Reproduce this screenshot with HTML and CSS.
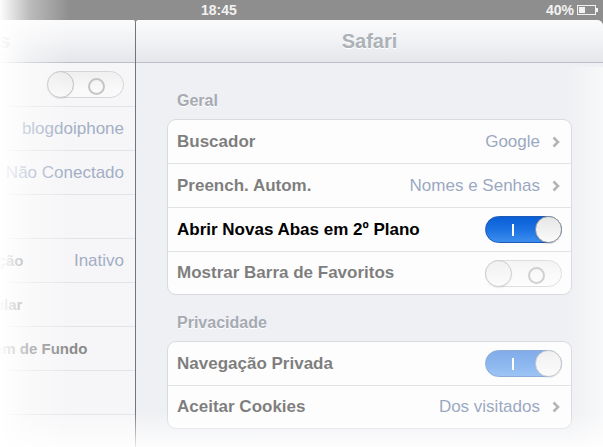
FILE: index.html
```html
<!DOCTYPE html>
<html lang="pt-BR">
<head>
    <meta charset="UTF-8">
    <meta name="viewport" content="width=device-width, initial-scale=1.0">
    <title>Ajustes - Safari</title>
    <link rel="stylesheet" href="styles.css">
</head>
<body>
    <div class="screen">
        <div class="statusbar">
            <span class="time">18:45</span>
            <span class="battery">40%
                <svg width="22" height="10" viewBox="0 0 22 10">
                    <rect x="0.5" y="0.5" width="18" height="9" fill="none" stroke="#f2f2f2"/>
                    <rect x="2" y="2" width="6" height="6" fill="#f2f2f2"/>
                    <rect x="19" y="3" width="2" height="4" fill="#f2f2f2"/>
                </svg>
            </span>
        </div>

        <div class="split">
            <aside class="master">
                <div class="navbar">
                    <span class="master-title">Ajustes</span>
                </div>
                <ul class="master-list">
                    <li class="master-row">
                        <span class="master-label">Modo Avião</span>
                        <span class="switch off"><span class="knob"></span></span>
                    </li>
                    <li class="master-row">
                        <span class="master-label">Wi-Fi</span>
                        <span class="master-value">blogdoiphone</span>
                    </li>
                    <li class="master-row">
                        <span class="master-label">VPN</span>
                        <span class="master-value">Não Conectado</span>
                    </li>
                    <li class="master-row">
                        <span class="master-label">Notificações</span>
                    </li>
                    <li class="master-row">
                        <span class="master-label">Rede de Ativação</span>
                        <span class="master-value">Inativo</span>
                    </li>
                    <li class="master-row">
                        <span class="master-label">Dados do Celular</span>
                    </li>
                    <li class="master-row">
                        <span class="master-label">Brilho e Imagem de Fundo</span>
                    </li>
                    <li class="master-row">
                        <span class="master-label">Moldura</span>
                    </li>
                    <li class="master-row">
                        <span class="master-label">Geral</span>
                    </li>
                </ul>
            </aside>

            <main class="detail">
                <div class="navbar">
                    <h1 class="detail-title">Safari</h1>
                </div>
                <div class="content">
                    <h2 class="group-title">Geral</h2>
                    <div class="group">
                        <div class="row dim">
                            <span class="label">Buscador</span>
                            <span class="value">Google</span>
                            <svg class="chevron" width="8" height="12" viewBox="0 0 8 12"><path d="M1.5 1.5 L6 6 L1.5 10.5" fill="none" stroke="#6f6f6f" stroke-width="2.6"/></svg>
                        </div>
                        <div class="row dim">
                            <span class="label">Preench. Autom.</span>
                            <span class="value">Nomes e Senhas</span>
                            <svg class="chevron" width="8" height="12" viewBox="0 0 8 12"><path d="M1.5 1.5 L6 6 L1.5 10.5" fill="none" stroke="#6f6f6f" stroke-width="2.6"/></svg>
                        </div>
                        <div class="row">
                            <span class="label">Abrir Novas Abas em 2º Plano</span>
                            <span class="switch on"><span class="knob"></span></span>
                        </div>
                        <div class="row dim">
                            <span class="label">Mostrar Barra de Favoritos</span>
                            <span class="switch off"><span class="knob"></span></span>
                        </div>
                    </div>

                    <h2 class="group-title">Privacidade</h2>
                    <div class="group">
                        <div class="row dim">
                            <span class="label">Navegação Privada</span>
                            <span class="switch on"><span class="knob"></span></span>
                        </div>
                        <div class="row dim">
                            <span class="label">Aceitar Cookies</span>
                            <span class="value">Dos visitados</span>
                            <svg class="chevron" width="8" height="12" viewBox="0 0 8 12"><path d="M1.5 1.5 L6 6 L1.5 10.5" fill="none" stroke="#6f6f6f" stroke-width="2.6"/></svg>
                        </div>
                    </div>
                </div>
            </main>
        </div>

        <div class="fade"></div>
    </div>
</body>
</html>
```

FILE: styles.css
```css
* {
    box-sizing: border-box;
}
body {
    margin: 0;
    background: #fff;
    font-family: "Liberation Sans", Arial, sans-serif;
}
.screen {
    position: relative;
    width: 603px;
    height: 447px;
    overflow: hidden;
    background: #8e8e8e;
}

/* status bar */
.statusbar {
    height: 20px;
    display: flex;
    align-items: center;
    color: #f2f2f2;
    font-size: 14px;
    font-weight: bold;
}
.time {
    margin-left: 201px;
}
.battery {
    margin-left: auto;
    margin-right: 4px;
    display: flex;
    align-items: center;
    gap: 3px;
}

/* split view */
.split {
    display: flex;
    height: 427px;
}
.master {
    width: 136px;
    border-right: 1px solid #747474;
    background: #f6f6f8;
    overflow: hidden;
    border-top-right-radius: 3px;
}
.detail {
    flex: 1;
    background: #eff0f3;
    border-top-left-radius: 3px;
    border-top-right-radius: 6px;
    overflow: hidden;
}
.navbar {
    height: 43px;
    border-bottom: 1px solid #b9bdc6;
    background: linear-gradient(#fbfbfc, #f1f2f4 50%, #e4e6ea);
    display: flex;
    align-items: center;
}
.master-title {
    margin-left: -62px;
    font-size: 20px;
    font-weight: bold;
    color: #b4b7bd;
    text-shadow: 0 1px 0 #fff;
}
.detail-title {
    margin: 0;
    width: 100%;
    text-align: center;
    font-size: 20px;
    font-weight: bold;
    color: #adb1b8;
    text-shadow: 0 1px 0 #fff;
}

/* master list */
.master-list {
    list-style: none;
    margin: 0 0 0 -101px;
    padding: 0;
}
.master-row {
    height: 44px;
    border-bottom: 1px solid #e3e4e7;
    display: flex;
    align-items: center;
    justify-content: space-between;
    padding-right: 11px;
}
.master-label {
    font-size: 15px;
    font-weight: bold;
    color: #8a8a8a;
}
.master-value {
    font-size: 17px;
    color: #a3aec6;
}
.master-row .switch {
    opacity: .6;
}
.master-row .switch.off::after {
    left: 40px;
}

/* grouped table */
.content {
    padding: 28px 31px 0;
}
.group-title {
    margin: 0 0 8px 10px;
    line-height: 20px;
    font-size: 16px;
    font-weight: bold;
    color: #a6aab3;
    text-shadow: 0 1px 0 #fff;
}
.group {
    background: #fdfdfd;
    border: 1px solid #d9dadd;
    border-radius: 9px;
    margin-bottom: 18px;
}
.row {
    height: 44px;
    display: flex;
    align-items: center;
    padding: 0 9px;
    border-bottom: 1px solid #e2e3e6;
}
.row:last-child {
    height: 42px;
    border-bottom: none;
}
.label {
    font-size: 17px;
    font-weight: bold;
    color: #000;
    margin-right: auto;
}
.value {
    font-size: 17px;
    color: #385487;
}
.chevron {
    margin-left: 12px;
    margin-right: 2px;
}
.row.dim > * {
    opacity: .5;
}

/* switches */
.switch {
    position: relative;
    display: block;
    width: 77px;
    height: 27px;
    border-radius: 14px;
    flex-shrink: 0;
}
.switch.on {
    background: linear-gradient(#0a5ed6, #1c72e2 50%, #3d8eee);
    border: 1px solid #1b5bb5;
}
.switch.on::before {
    content: "";
    position: absolute;
    left: 26px;
    top: 7px;
    width: 2px;
    height: 12px;
    background: #fff;
}
.switch.off {
    background: linear-gradient(#ececec, #fafafa 60%, #fdfdfd);
    border: 1px solid #c2c2c2;
}
.switch.off::after {
    content: "";
    position: absolute;
    left: 42px;
    top: 6px;
    width: 13px;
    height: 13px;
    border: 2px solid #a5a5a5;
    border-radius: 50%;
}
.knob {
    position: absolute;
    top: -1px;
    width: 27px;
    height: 27px;
    border-radius: 50%;
    border: 1px solid #9c9c9c;
    background: linear-gradient(#e6e6e6, #fbfbfb);
    box-shadow: 0 1px 1px rgba(0, 0, 0, .15);
}
.switch.on .knob {
    right: -1px;
}
.switch.off .knob {
    left: -1px;
}

/* white vignette over the photo */
.fade {
    position: absolute;
    inset: 0;
    pointer-events: none;
    background:
        linear-gradient(to right, rgba(255,255,255,.98) 0, rgba(255,255,255,.75) 12px, rgba(255,255,255,.4) 30px, rgba(255,255,255,0) 70px),
        linear-gradient(to bottom, rgba(255,255,255,0) 412px, rgba(255,255,255,.85) 447px),
        linear-gradient(to left, rgba(255,255,255,.55) 0, rgba(255,255,255,0) 35px) right bottom / 40px 380px no-repeat;
}
```
